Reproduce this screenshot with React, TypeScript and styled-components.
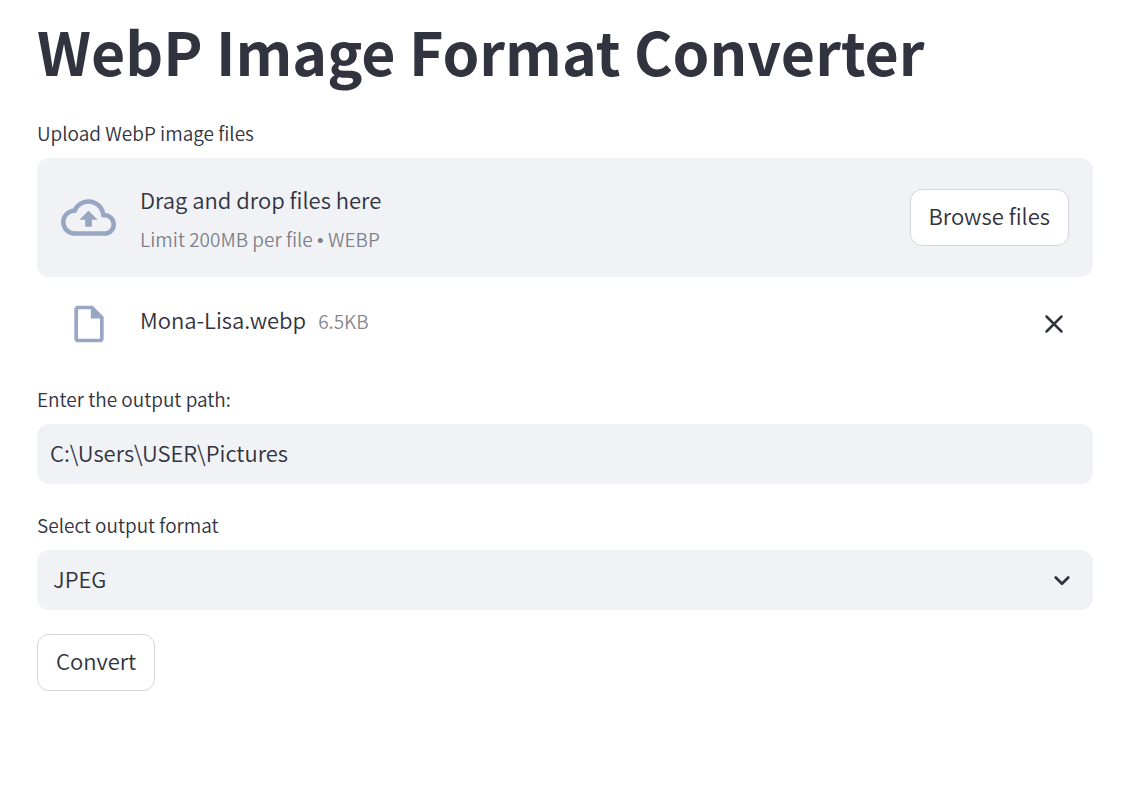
import React, { useState } from "react";
import styled, { createGlobalStyle } from "styled-components";

const Global = createGlobalStyle`
  *, *::before, *::after { box-sizing: border-box; }
  body {
    margin: 0;
    background: #ffffff;
    color: #31333f;
    font-family: "Source Sans Pro", "Noto Sans CJK SC", sans-serif;
    font-size: 22px;
    font-weight: 350;
    line-height: 32px;
  }
  button, input, select { font: inherit; color: inherit; }
`;

const Page = styled.main`
  padding: 9px 33px 32px 37px;
`;

const Title = styled.h1`
  margin: 0 0 26px;
  font-size: 59px;
  line-height: 84px;
  font-weight: 700;
`;

const Field = styled.section`
  display: flex;
  flex-direction: column;
  margin-bottom: 27px;
  &:last-of-type { margin-bottom: 24px; }
`;

const Label = styled.label`
  margin-bottom: 11px;
  font-size: 19px;
  line-height: 28px;
`;

const DropZone = styled.div`
  display: flex;
  align-items: center;
  gap: 24px;
  padding: 0 24px;
  min-height: 119px;
  border-radius: 12px;
  background: #f0f2f6;
`;

const ZoneText = styled.div`
  flex: 1;
  display: flex;
  flex-direction: column;
  gap: 10px;
  padding-top: 2px;
`;

const Hint = styled.small`
  font-size: 19px;
  line-height: 28px;
  color: rgba(49, 51, 63, 0.6);
`;

const Bullet = styled.span`
  font-family: "Liberation Sans", sans-serif;
`;

const Button = styled.button`
  height: 57px;
  padding: 0 18px 6px;
  border: 1px solid #d6d6d9;
  border-radius: 12px;
  background: #ffffff;
  cursor: pointer;
`;

const FileRow = styled.div`
  display: flex;
  align-items: center;
  height: 81px;
  padding: 12px 24px 0;
`;

const FileIconBox = styled.div`
  display: flex;
  justify-content: center;
  width: 55px;
  margin-right: 24px;
`;

const FileInfo = styled.div`
  display: flex;
  align-items: baseline;
  gap: 12px;
  padding-bottom: 10px;
`;

const IconButton = styled.button`
  display: flex;
  margin-left: auto;
  padding: 0;
  border: 0;
  background: none;
  cursor: pointer;
`;

const TextInput = styled.input`
  width: 100%;
  height: 60px;
  padding: 0 13px 4px;
  border: 0;
  border-radius: 12px;
  background: #f0f2f6;
`;

const SelectBox = styled.div`
  display: grid;
  align-items: center;
  border-radius: 12px;
  background: #f0f2f6;
  & > * { grid-area: 1 / 1; }
  & > svg { justify-self: end; margin-right: 16px; pointer-events: none; }
`;

const Select = styled.select`
  appearance: none;
  width: 100%;
  height: 60px;
  padding: 0 16px 4px;
  border: 0;
  border-radius: 12px;
  background: transparent;
`;

export default function App() {
  const [path, setPath] = useState("C:\\Users\\USER\\Pictures");
  const [hasFile, setHasFile] = useState(true);
  return (
    <>
      <Global />
      <Page>
        <Title>WebP Image Format Converter</Title>
        <Field>
          <Label htmlFor="browse">Upload WebP image files</Label>
          <DropZone>
            <svg width="55" height="55" viewBox="0 0 24 24" fill="#97a6c3" aria-hidden="true">
              <path d="M19.35 10.04A7.49 7.49 0 0012 4C9.11 4 6.6 5.64 5.35 8.04A5.994 5.994 0 000 14c0 3.31 2.69 6 6 6h13c2.76 0 5-2.24 5-5 0-2.64-2.05-4.78-4.65-4.96zM19 18H6c-2.21 0-4-1.79-4-4 0-2.05 1.53-3.76 3.56-3.97l1.07-.11.5-.95A5.469 5.469 0 0112 6c2.62 0 4.88 1.86 5.39 4.43l.3 1.5 1.53.11A2.98 2.98 0 0122 15c0 1.65-1.35 3-3 3zM8 13h2.55v3h2.9v-3H16l-4-4z" />
            </svg>
            <ZoneText>
              <span>Drag and drop files here</span>
              <Hint>Limit 200MB per file <Bullet>•</Bullet> WEBP</Hint>
            </ZoneText>
            <Button id="browse" type="button">Browse files</Button>
          </DropZone>
          {hasFile && (
            <FileRow>
              <FileIconBox>
                <svg width="44" height="44" viewBox="0 0 24 24" fill="#97a6c3" aria-hidden="true">
                  <path d="M6 2c-1.1 0-2 .9-2 2v16c0 1.1.9 2 2 2h12c1.1 0 2-.9 2-2V8l-6-6H6zm0 18V4h7v5h5v11H6z" />
                </svg>
              </FileIconBox>
              <FileInfo>
                <span>Mona-Lisa.webp</span>
                <Hint>6.5KB</Hint>
              </FileInfo>
              <IconButton type="button" aria-label="Remove file" onClick={() => setHasFile(false)}>
                <svg width="30" height="30" viewBox="0 0 24 24" fill="none" stroke="#31333f" strokeWidth="2" strokeLinecap="round" aria-hidden="true">
                  <path d="M6 6l12 12M18 6L6 18" />
                </svg>
              </IconButton>
            </FileRow>
          )}
        </Field>
        <Field>
          <Label htmlFor="path">Enter the output path:</Label>
          <TextInput id="path" value={path} onChange={(e) => setPath(e.target.value)} />
        </Field>
        <Field>
          <Label htmlFor="format">Select output format</Label>
          <SelectBox>
            <Select id="format" defaultValue="JPEG">
              <option>JPEG</option>
              <option>PNG</option>
            </Select>
            <svg width="30" height="30" viewBox="0 0 24 24" fill="none" stroke="#31333f" strokeWidth="2.2" strokeLinecap="round" strokeLinejoin="round" aria-hidden="true">
              <path d="M7 10l5 5 5-5" />
            </svg>
          </SelectBox>
        </Field>
        <Button type="button">Convert</Button>
      </Page>
    </>
  );
}
